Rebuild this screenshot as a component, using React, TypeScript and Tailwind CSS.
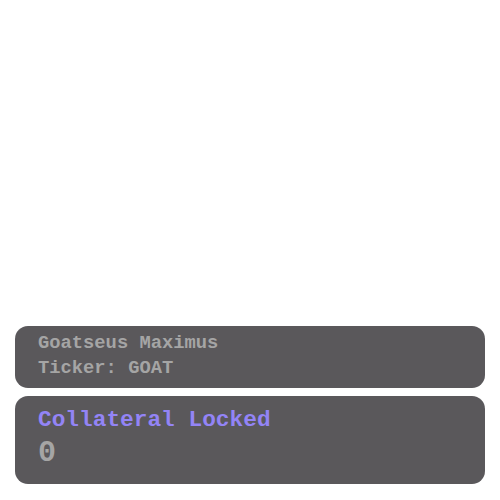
export default function App() {
  return (
    <div className="h-[500px] w-[500px] bg-white flex flex-col justify-end gap-[8px] px-[15px] pb-[16px] font-['Liberation_Mono','Courier_New',monospace] font-bold">
      <div className="h-[62px] rounded-[13px] bg-[#5a585b] pl-[23px] pt-[5px] flex flex-col text-[#a5a5a5] text-[18.8px] leading-[25px]">
        <div>Goatseus Maximus</div>
        <div>Ticker: GOAT</div>
      </div>
      <div className="h-[88px] rounded-[13px] bg-[#5a585b] pl-[23px] pt-[9px] flex flex-col">
        <div className="text-[#9384f6] text-[22.8px] leading-[30px]">Collateral Locked</div>
        <div className="text-[#a5a5a5] text-[30px] leading-[36px]">0</div>
      </div>
    </div>
  );
}
